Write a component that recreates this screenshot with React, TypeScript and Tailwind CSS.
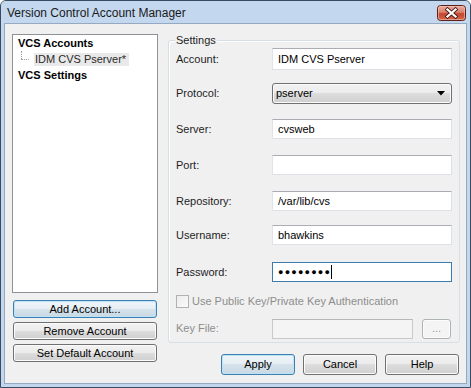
import React from "react";

const font = { fontFamily: '"Liberation Sans", Arial, sans-serif' };

function TextBox({ value, focused, disabled, w = "w-[180px]", h = "h-[20px]" }: { value?: React.ReactNode; focused?: boolean; disabled?: boolean; w?: string; h?: string }) {
  const border = focused
    ? "border-[#3d7bad]"
    : disabled
    ? "border-[#c9c9c9] border-t-[#b8b8b8]"
    : "border-[#dde1e6] border-t-[#abadb3] border-l-[#e2e3ea] border-r-[#dbdfe6]";
  return (
    <div className={`${w} ${h} border ${border} ${disabled ? "bg-[#f4f4f4]" : "bg-white"} flex items-center pl-[5px] text-[11px] text-black`}>
      {value}
    </div>
  );
}

function Btn({ children, def, disabled, cls }: { children: React.ReactNode; def?: boolean; disabled?: boolean; cls: string }) {
  return (
    <div
      className={`${cls} rounded-[3px] border flex items-center justify-center text-[11px] ${
        def
          ? "border-[#3c7fb1] shadow-[inset_0_0_0_1px_#bde3f7] text-black bg-[linear-gradient(to_bottom,#eef5fa_0%,#e6eef4_50%,#d6e3ec_50%,#c9d8e3_100%)]"
          : disabled
          ? "border-[#adb2b5] text-[#9a9a9a] bg-[#f4f4f4] shadow-[inset_0_0_0_1px_#fcfcfc]"
          : "border-[#707070] text-black shadow-[inset_0_0_0_1px_#fbfbfb] bg-[linear-gradient(to_bottom,#f2f2f2_0%,#ebebeb_50%,#dddddd_50%,#cfcfcf_100%)]"
      }`}
    >
      {children}
    </div>
  );
}

function Row({ label, mt, children }: { label: string; mt: string; children: React.ReactNode }) {
  return (
    <div className={`flex items-center ${mt}`}>
      <div className="w-[96px] text-[11px] text-[#1e1e1e]">{label}</div>
      {children}
    </div>
  );
}

function CloseButton() {
  return (
    <svg width="29" height="16" viewBox="0 0 29 16" className="mt-[1px] shrink-0">
      <defs>
        <linearGradient id="cbg" x1="0" y1="0" x2="0" y2="1">
          <stop offset="0" stopColor="#eab0a2" />
          <stop offset="0.45" stopColor="#d9806c" />
          <stop offset="0.55" stopColor="#c4462d" />
          <stop offset="1" stopColor="#d06a4e" />
        </linearGradient>
      </defs>
      <rect x="0.5" y="0.5" width="28" height="15" rx="3" fill="url(#cbg)" stroke="#5e1f17" />
      <rect x="1.5" y="1.5" width="26" height="13" rx="2" fill="none" stroke="#f3c8bd" strokeOpacity="0.6" />
      <path d="M10.5 4.5 L18.5 11.5 M18.5 4.5 L10.5 11.5" stroke="#4a1c16" strokeWidth="4" strokeLinecap="square" />
      <path d="M10.5 4.5 L18.5 11.5 M18.5 4.5 L10.5 11.5" stroke="#ffffff" strokeWidth="2.3" strokeLinecap="square" />
    </svg>
  );
}

export default function App() {
  return (
    <div style={font} className="w-[471px] h-[388px] flex flex-col border border-[#3a4b60] rounded-t-[6px] bg-[#c2d7ee] overflow-hidden">
      {/* Title bar */}
      <div className="h-[22px] flex items-center pl-[6px] pr-[4px] bg-[#c3d7ee]">
        <div className="text-[12px] text-[#1a1a1a] flex-1 pt-[1px]">Version Control Account Manager</div>
        <CloseButton />
      </div>
      {/* Client */}
      <div className="flex-1 mx-[3px] mb-[3px] border border-[#95a9c1] bg-[#f0f0f0] flex">
        {/* Left column */}
        <div className="ml-[7px] mt-[10px] w-[146px] flex flex-col">
          <div className="h-[259px] border border-[#8e9297] bg-white pl-[5px] text-[11px]">
            <div className="h-[16px] flex items-center font-bold text-black">VCS Accounts</div>
            <div className="h-[16px] flex items-center relative">
              <div className="w-[8px] h-[16px] ml-[3px] relative">
                <div className="absolute left-0 top-0 h-[8px] border-l border-dotted border-[#a0a0a0]" />
                <div className="absolute left-0 top-[8px] w-[8px] border-t border-dotted border-[#a0a0a0]" />
              </div>
              <div className="ml-[5px] h-[13px] flex items-center bg-[#e9e9e9] pl-[1px] pr-[3px] text-[#2a2a2a]">IDM CVS Pserver*</div>
            </div>
            <div className="h-[16px] flex items-center font-bold text-black">VCS Settings</div>
          </div>
          <div className="mt-[7px] flex flex-col gap-[4px]">
            <Btn def cls="ml-[1px] w-[144px] h-[18px]">Add Account...</Btn>
            <Btn cls="ml-[1px] w-[144px] h-[18px]">Remove Account</Btn>
            <Btn cls="ml-[1px] w-[144px] h-[18px]">Set Default Account</Btn>
          </div>
        </div>
        {/* Right column */}
        <div className="ml-[10px] mt-[16px] w-[292px] flex flex-col">
          <div className="relative h-[303px] border border-[#d5dfe5] rounded-[3px] shadow-[inset_1px_1px_0_#ffffff] pl-[7px] flex flex-col">
            <div className="absolute left-[6px] top-[-7px] px-[1px] bg-[#f0f0f0] text-[11px] text-[#1e1e1e] leading-[13px]">Settings</div>
            <Row label="Account:" mt="mt-[7px]">
              <TextBox value="IDM CVS Pserver" h="h-[22px]" />
            </Row>
            <Row label="Protocol:" mt="mt-[13px]">
              <div className="w-[180px] h-[21px] rounded-[3px] border border-[#707070] shadow-[inset_0_0_0_1px_#fbfbfb] bg-[linear-gradient(to_bottom,#f2f2f2_0%,#ebebeb_50%,#dddddd_50%,#cfcfcf_100%)] flex items-center pl-[3px] pr-[6px] text-[11px] text-black">
                <span className="flex-1">pserver</span>
                <svg width="8" height="5" viewBox="0 0 8 5"><path d="M0 0 H8 L4 4.5 Z" fill="#000" /></svg>
              </div>
            </Row>
            <Row label="Server:" mt="mt-[15px]">
              <TextBox value="cvsweb" />
            </Row>
            <Row label="Port:" mt="mt-[16px]">
              <TextBox value="" />
            </Row>
            <Row label="Repository:" mt="mt-[16px]">
              <TextBox value="/var/lib/cvs" />
            </Row>
            <Row label="Username:" mt="mt-[14px]">
              <TextBox value="bhawkins" />
            </Row>
            <Row label="Password:" mt="mt-[17px]">
              <TextBox
                focused
                value={
                  <span className="flex items-center">
                    <span className="text-[9px] tracking-[1.2px] leading-none">●●●●●●●●</span>
                    <span className="w-[1px] h-[14px] bg-black" />
                  </span>
                }
              />
            </Row>
            <div className="mt-[11px] flex items-center">
              <div className="w-[13px] h-[13px] border border-[#b1b1b1] bg-[linear-gradient(135deg,#ececec,#fafafa)]" />
              <span className="ml-[3px] text-[11px] text-[#8d8d8d]">Use Public Key/Private Key Authentication</span>
            </div>
            <div className="mt-[9px] flex items-center">
              <div className="w-[96px] text-[11px] text-[#8d8d8d]">Key File:</div>
              <TextBox disabled w="w-[141px]" />
              <Btn disabled cls="ml-[9px] w-[29px] h-[20px]">...</Btn>
            </div>
          </div>
          <div className="mt-[11px] flex justify-end gap-[8px] pr-[1px]">
            <Btn def cls="w-[74px] h-[21px]">Apply</Btn>
            <Btn cls="w-[74px] h-[21px]">Cancel</Btn>
            <Btn cls="w-[74px] h-[21px]">Help</Btn>
          </div>
        </div>
      </div>
    </div>
  );
}
